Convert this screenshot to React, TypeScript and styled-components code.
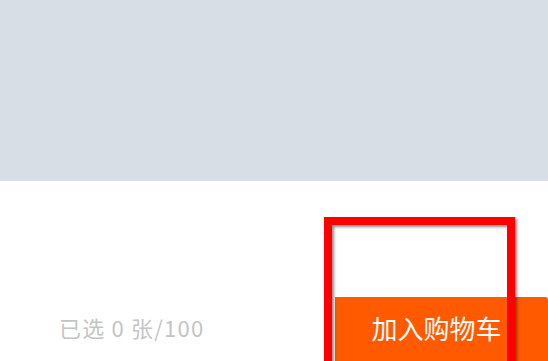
import React from 'react';
import styled, { createGlobalStyle } from 'styled-components';

const GlobalStyle = createGlobalStyle`
  html, body {
    margin: 0;
    padding: 0;
    background: #fff;
  }
  #root {
    width: 548px;
    height: 361px;
    overflow: hidden;
  }
`;

const Page = styled.div`
  position: relative;
  display: flex;
  flex-direction: column;
  width: 548px;
  height: 361px;
  overflow: hidden;
  font-family: "Noto Sans CJK SC", "Noto Sans", sans-serif;
`;

const Preview = styled.div`
  height: 181px;
  flex-shrink: 0;
  background: #d8dee6;
`;

const Footer = styled.div`
  flex: 1;
  display: flex;
  flex-direction: column;
  justify-content: flex-end;
  background: #fff;
`;

const ActionBar = styled.div`
  display: flex;
  align-items: center;
  height: 64px;
  padding-left: 59px;
`;

const Counter = styled.span`
  margin-bottom: 4px;
  font-size: 22px;
  letter-spacing: 1.2px;
  color: #c4c4c4;
`;

const CartButton = styled.button`
  margin-left: auto;
  width: 213px;
  height: 64px;
  border: none;
  border-top-right-radius: 3px;
  background: #ff5a00;
  color: #fff;
  font-family: inherit;
  font-size: 26px;
  padding: 0 10px 4px 0;
  cursor: pointer;
`;

const Highlight = styled.div`
  position: absolute;
  left: 324px;
  top: 217px;
  width: 175px;
  height: 200px;
  border: 8px solid #ff0000;
  box-shadow: 2px 2px 3px rgba(0, 0, 0, 0.45), inset 2px 2px 3px rgba(0, 0, 0, 0.45);
  pointer-events: none;
`;

export default function App() {
  return (
    <>
      <GlobalStyle />
      <Page>
        <Preview />
        <Footer>
          <ActionBar>
            <Counter>已选 0 张/100</Counter>
            <CartButton>加入购物车</CartButton>
          </ActionBar>
        </Footer>
        <Highlight />
      </Page>
    </>
  );
}
